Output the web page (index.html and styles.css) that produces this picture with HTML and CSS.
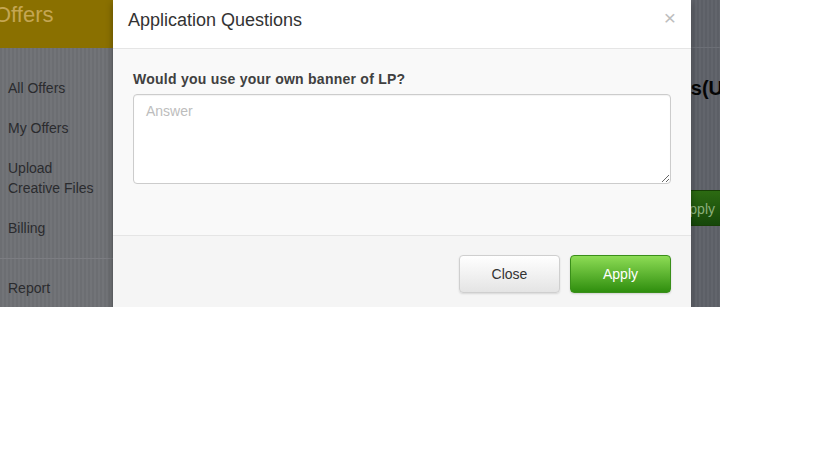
FILE: index.html
```html
<!DOCTYPE html>
<html lang="en">
<head>
<meta charset="utf-8">
<title>Application Questions</title>
<link rel="stylesheet" href="styles.css">
</head>
<body>
<div class="page">
  <aside class="sidebar">
    <div class="brand">Offers</div>
    <nav class="nav">
      <a class="nav-item">All Offers</a>
      <a class="nav-item">My Offers</a>
      <a class="nav-item">Upload<br>Creative Files</a>
      <a class="nav-item">Billing</a>
      <div class="nav-divider"></div>
      <a class="nav-item">Report</a>
    </nav>
  </aside>
  <main class="main">
    <div class="topbar"></div>
    <h2 class="offer-title">Offers(US)</h2>
    <div class="offer-actions"><span class="bg-apply">Apply</span></div>
  </main>

  <div class="modal">
    <div class="modal-header">
      <h3 class="modal-title">Application Questions</h3>
      <span class="modal-close">×</span>
    </div>
    <div class="modal-body">
      <label class="question">Would you use your own banner of LP?</label>
      <textarea class="answer" placeholder="Answer"></textarea>
    </div>
    <div class="modal-footer">
      <button class="btn btn-default">Close</button>
      <button class="btn btn-success">Apply</button>
    </div>
  </div>
</div>
</body>
</html>
```

FILE: styles.css
```css
html, body {
  margin: 0;
  padding: 0;
  background: #ffffff;
}

body {
  font-family: "Liberation Sans", Arial, sans-serif;
  font-size: 14px;
  line-height: 20px;
  color: #333333;
}

.page {
  position: relative;
  width: 720px;
  height: 307px;
  overflow: hidden;
  display: flex;
}

/* ---------- dimmed background page ---------- */
.sidebar {
  width: 113px;
  flex: none;
  background: repeating-linear-gradient(90deg, #6c6e72 0 2px, #727478 2px 4px);
}

.brand {
  height: 48px;
  background: #8a7000;
  color: #c4a653;
  font-size: 22px;
  line-height: 30px;
  text-indent: -6px;
  box-sizing: border-box;
}

.nav {
  display: flex;
  flex-direction: column;
  padding-top: 20px;
}

.nav-item {
  display: block;
  padding: 10px 8px;
  color: #2a2b2e;
  font-size: 14px;
  line-height: 20px;
}

.nav-divider {
  height: 1px;
  margin: 10px 0 9px 0;
  background: #7c7d82;
}

.main {
  flex: 1;
  background: repeating-linear-gradient(90deg, #5c5f66 0 2px, #62656c 2px 4px);
}

.topbar {
  height: 48px;
  border-bottom: 1px solid #6c6f76;
  box-sizing: border-box;
}

.offer-title {
  margin: 29px 0 0 530px;
  font-size: 20px;
  line-height: 22px;
  font-weight: bold;
  color: #050505;
  white-space: nowrap;
}

.offer-actions {
  margin: 91px 0 0 547px;
}

.bg-apply {
  display: inline-block;
  height: 36px;
  padding: 0 19px;
  line-height: 36px;
  border: 1px solid #173f06;
  border-radius: 4px;
  background: linear-gradient(#2c6a12, #16470a);
  color: #8cb07c;
  font-size: 14px;
  box-sizing: border-box;
}

/* ---------- modal ---------- */
.modal {
  position: absolute;
  left: 113px;
  top: 0;
  width: 578px;
  background: #ffffff;
  box-shadow: 0 3px 7px rgba(0, 0, 0, 0.35);
}

.modal-header {
  display: flex;
  justify-content: space-between;
  align-items: flex-start;
  padding: 10px 15px 18px 15px;
  border-bottom: 1px solid #e5e5e5;
  background: #ffffff;
}

.modal-title {
  margin: 0;
  font-size: 18px;
  line-height: 20px;
  font-weight: normal;
  color: #333333;
}

.modal-close {
  font-size: 21px;
  line-height: 14px;
  font-weight: normal;
  color: #bdbdbd;
  margin-top: 1px;
}

.modal-body {
  background: #f9f9f9;
  padding: 20px 20px 20px 20px;
}

.question {
  display: block;
  margin-bottom: 5px;
  font-weight: bold;
  font-size: 14px;
  line-height: 20px;
  letter-spacing: 0.25px;
  color: #404040;
}

.answer {
  display: block;
  width: 100%;
  height: 90px;
  margin: 0 0 31px 0;
  padding: 6px 12px;
  box-sizing: border-box;
  border: 1px solid #cccccc;
  border-radius: 4px;
  background: #ffffff;
  font-family: "Liberation Sans", Arial, sans-serif;
  font-size: 14px;
  line-height: 20px;
  color: #555555;
  box-shadow: inset 0 1px 1px rgba(0, 0, 0, 0.05);
}

.answer::placeholder {
  color: #bdbdbd;
}

.modal-footer {
  display: flex;
  justify-content: flex-end;
  gap: 10px;
  padding: 19px 20px 20px 20px;
  border-top: 1px solid #e5e5e5;
  background: #f5f5f5;
}

.btn {
  width: 101px;
  height: 38px;
  border-radius: 4px;
  font-family: "Liberation Sans", Arial, sans-serif;
  font-size: 14px;
  line-height: 20px;
  padding: 0;
  cursor: pointer;
}

.btn-default {
  color: #333333;
  border: 1px solid #cfcfcf;
  background: linear-gradient(#ffffff, #e4e4e4);
  box-shadow: 0 1px 2px rgba(0, 0, 0, 0.12);
}

.btn-success {
  color: #ffffff;
  border: 1px solid #3a8f1a;
  background: linear-gradient(#8ddc55, #2f8e0e);
  box-shadow: 0 1px 2px rgba(0, 0, 0, 0.15);
}
```
